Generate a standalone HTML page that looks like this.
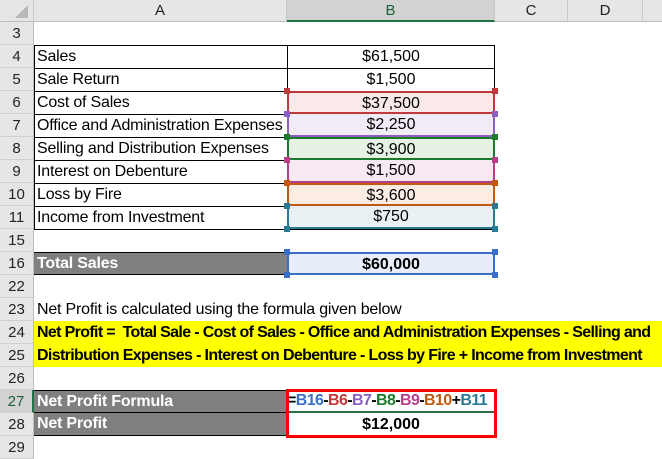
<!DOCTYPE html>
<html><head><style>
body{margin:0;width:662px;height:457px;background:#fff;position:relative;overflow:hidden;font-family:"Liberation Sans",Arial,sans-serif;font-size:16px;color:#000}
div{position:absolute;box-sizing:border-box}
.ch{top:0;height:22px;background:#e6e6e6;border-right:1px solid #c8c8c8;border-bottom:1px solid #bdbdbd;text-align:center;line-height:22px;color:#222;font-size:15px}
.rh{left:0;width:34px;height:23px;background:#e6e6e6;border-right:1px solid #bdbdbd;border-bottom:1px solid #d0d0d0;text-align:center;line-height:23px;color:#222;font-size:15px}
.a{left:34px;width:253px;height:23px;line-height:24px;padding-left:3px;white-space:nowrap;letter-spacing:-0.2px}
.b{left:287px;width:208px;height:23px;line-height:21px;text-align:center}
.g{background:#808080;color:#fff;font-weight:bold}
.h{width:6px;height:6px}
</style></head><body>
<div class="ch" style="left:0;width:34px"><svg width="34" height="22" style="position:absolute;left:0;top:0"><polygon points="28,5 28,18 15,18" fill="#b8b8b8"/></svg></div>
<div class="ch" style="left:34px;width:253px">A</div>
<div class="ch" style="left:287px;width:208px;background:#d2d2d2;border-bottom:2px solid #217346;color:#1d5f38">B</div>
<div class="ch" style="left:495px;width:73px">C</div>
<div class="ch" style="left:568px;width:75px">D</div>
<div class="ch" style="left:643px;width:19px;border-right:none"></div>

<div class="rh" style="top:22px">3</div>
<div class="rh" style="top:45px">4</div>
<div class="rh" style="top:68px">5</div>
<div class="rh" style="top:91px">6</div>
<div class="rh" style="top:114px">7</div>
<div class="rh" style="top:137px">8</div>
<div class="rh" style="top:160px">9</div>
<div class="rh" style="top:183px">10</div>
<div class="rh" style="top:206px">11</div>
<div class="rh" style="top:229px">15</div>
<div class="rh" style="top:252px">16</div>
<div class="rh" style="top:275px">22</div>
<div class="rh" style="top:298px">23</div>
<div class="rh" style="top:321px">24</div>
<div class="rh" style="top:344px">25</div>
<div class="rh" style="top:367px">26</div>
<div class="rh" style="top:390px;background:#d2d2d2;border-right:2px solid #217346;color:#1d5f38">27</div>
<div class="rh" style="top:413px">28</div>
<div class="rh" style="top:436px">29</div>

<div style="left:34px;top:45px;width:461px;height:185px;border:1px solid #000"></div>
<div style="left:287px;top:45px;width:1px;height:185px;background:#000"></div>
<div style="left:34px;top:68px;width:461px;height:1px;background:#000"></div>
<div style="left:34px;top:91px;width:461px;height:1px;background:#000"></div>
<div style="left:34px;top:114px;width:461px;height:1px;background:#000"></div>
<div style="left:34px;top:137px;width:461px;height:1px;background:#000"></div>
<div style="left:34px;top:160px;width:461px;height:1px;background:#000"></div>
<div style="left:34px;top:183px;width:461px;height:1px;background:#000"></div>
<div style="left:34px;top:206px;width:461px;height:1px;background:#000"></div>

<div class="a" style="top:45px">Sales</div>
<div class="a" style="top:68px">Sale Return</div>
<div class="a" style="top:91px">Cost of Sales</div>
<div class="a" style="top:114px">Office and Administration Expenses</div>
<div class="a" style="top:137px">Selling and Distribution Expenses</div>
<div class="a" style="top:160px">Interest on Debenture</div>
<div class="a" style="top:183px">Loss by Fire</div>
<div class="a" style="top:206px">Income from Investment</div>

<div class="b" style="top:45px;line-height:23px">$61,500</div>
<div class="b" style="top:68px;line-height:23px">$1,500</div>
<div class="b" style="top:91px;background:#f9e9e9;border:2px solid #c0393b">$37,500</div>
<div class="b" style="top:114px;background:#f0ebf7;border:2px solid #8a5fc0;border-top:none">$2,250</div>
<div class="b" style="top:137px;background:#e6f2e4;border:2px solid #1c7a2c">$3,900</div>
<div class="b" style="top:160px;background:#f7e9f2;border:2px solid #b83f8a;border-top:none">$1,500</div>
<div class="b" style="top:183px;background:#fbede4;border:2px solid #c05a10">$3,600</div>
<div class="b" style="top:206px;background:#e8f0f3;border:2px solid #2a7a94;border-top:none">$750</div>

<div class="h" style="left:284px;top:88px;background:#c0393b"></div><div class="h" style="left:492px;top:88px;background:#c0393b"></div>
<div class="h" style="left:284px;top:111px;background:#8a5fc0"></div><div class="h" style="left:492px;top:111px;background:#8a5fc0"></div>
<div class="h" style="left:284px;top:134px;background:#1c7a2c"></div><div class="h" style="left:492px;top:134px;background:#1c7a2c"></div>
<div class="h" style="left:284px;top:157px;background:#b83f8a"></div><div class="h" style="left:492px;top:157px;background:#b83f8a"></div>
<div class="h" style="left:284px;top:180px;background:#c05a10"></div><div class="h" style="left:492px;top:180px;background:#c05a10"></div>
<div class="h" style="left:284px;top:203px;background:#2a7a94"></div><div class="h" style="left:492px;top:203px;background:#2a7a94"></div>
<div class="h" style="left:284px;top:226px;background:#2a7a94"></div><div class="h" style="left:492px;top:226px;background:#2a7a94"></div>

<div class="a g" style="top:252px;border-top:1px solid #000;border-bottom:1px solid #000;line-height:22px">Total Sales</div>
<div class="b" style="top:252px;background:#e7eef9;border:2px solid #3a6fc8;font-weight:bold">$60,000</div>
<div class="h" style="left:284px;top:249px;background:#3a6fc8"></div><div class="h" style="left:492px;top:249px;background:#3a6fc8"></div>
<div class="h" style="left:284px;top:272px;background:#3a6fc8"></div><div class="h" style="left:492px;top:272px;background:#3a6fc8"></div>

<div class="a" style="top:298px;width:500px">Net Profit is calculated using the formula given below</div>
<div style="left:34px;top:321px;width:628px;height:46px;background:#ffff00"></div>
<div class="a" style="top:321px;width:628px;font-weight:bold;letter-spacing:-0.65px">Net Profit = &nbsp;Total Sale - Cost of Sales - Office and Administration Expenses - Selling and</div>
<div class="a" style="top:344px;width:628px;font-weight:bold;letter-spacing:-0.65px">Distribution Expenses - Interest on Debenture - Loss by Fire + Income from Investment</div>

<div class="a g" style="top:390px;border-top:1px solid #000;border-bottom:1px solid #000;line-height:22px">Net Profit Formula</div>
<div class="a g" style="top:413px;border-bottom:1px solid #000;line-height:22px">Net Profit</div>
<div class="b" style="top:390px;font-weight:bold;text-align:left;padding-left:0;letter-spacing:-0.6px;border-bottom:2px solid #2e6b47;white-space:nowrap;line-height:22px"><span>=</span><span style="color:#3a6fc8">B16</span>-<span style="color:#c0393b">B6</span>-<span style="color:#8a5fc0">B7</span>-<span style="color:#1c7a2c">B8</span>-<span style="color:#b83f8a">B9</span>-<span style="color:#c05a10">B10</span>+<span style="color:#2a7a94">B11</span></div>
<div class="b" style="top:413px;font-weight:bold;line-height:23px">$12,000</div>
<div style="left:286px;top:389px;width:211px;height:49px;border:3px solid #ff0000"></div>
</body></html>
